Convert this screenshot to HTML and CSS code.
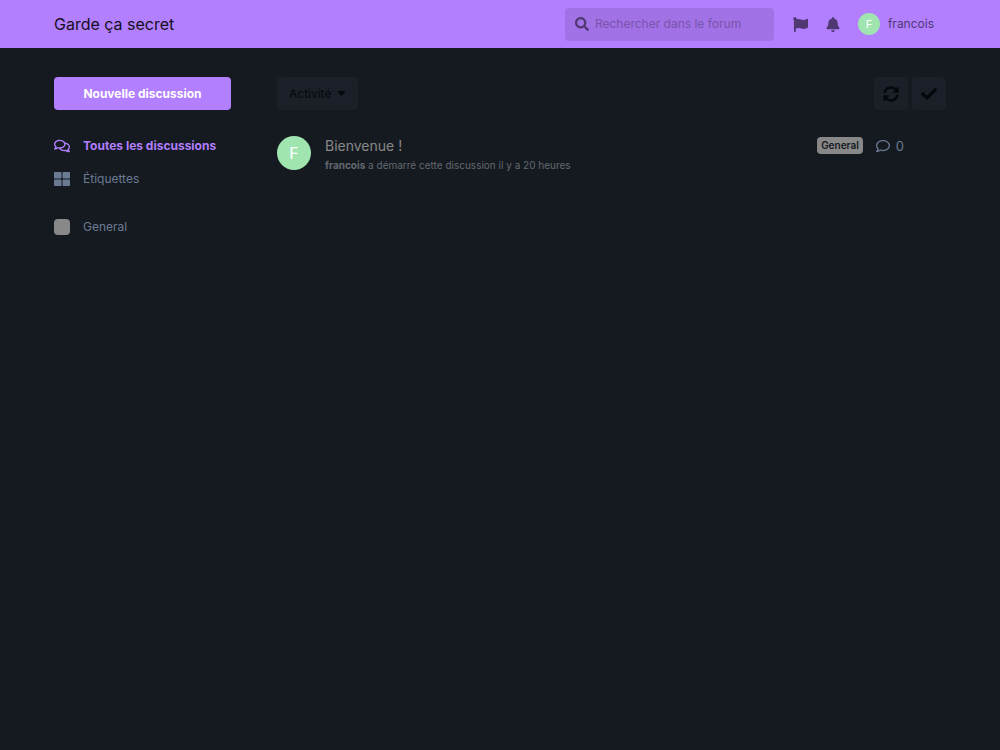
FILE: index.html
```
<!DOCTYPE html>
<html lang="fr">
<head>
    <meta charset="utf-8">
    <meta name="viewport" content="width=device-width, initial-scale=1">
    <title>Garde ça secret</title>
    <link rel="stylesheet" href="styles.css">
</head>
<body>
    <header class="header">
        <div class="container header-inner">
            <h1 class="header-title"><a href="#">Garde ça secret</a></h1>
            <form class="search">
                <svg class="icon" viewBox="0 0 512 512" aria-hidden="true"><path d="M505 442.700L405.300 343c-4.500-4.500-10.600-7-17-7H372c27.600-35.300 44-79.700 44-128C416 93.100 322.900 0 208 0S0 93.100 0 208s93.100 208 208 208c48.300 0 92.700-16.400 128-44v16.300c0 6.400 2.500 12.500 7 17l99.700 99.700c9.400 9.400 24.600 9.400 33.900 0l28.300-28.300c9.400-9.400 9.400-24.600.1-34zM208 336c-70.700 0-128-57.200-128-128 0-70.700 57.200-128 128-128 70.700 0 128 57.200 128 128 0 70.700-57.200 128-128 128z"/></svg>
                <input type="search" placeholder="Rechercher dans le forum" aria-label="Rechercher dans le forum">
            </form>
            <button class="header-button" type="button" aria-label="Signalements">
                <svg class="icon flag" viewBox="0 0 512 512"><path d="M349.565 98.783C295.978 98.783 251.721 64 184.348 64c-24.955 0-47.309 4.384-68.045 12.013a55.947 55.947 0 0 0 3.586-23.562C118.117 24.015 94.806 1.206 66.338.048 34.345-1.254 8 24.296 8 56c0 19.026 9.497 35.825 24 45.945V488c0 13.255 10.745 24 24 24h16c13.255 0 24-10.745 24-24v-94.400c28.311-12.064 63.582-22.122 114.435-22.122 53.588 0 97.844 34.783 165.217 34.783 48.169 0 86.667-16.294 122.505-40.858C506.840 359.452 512 349.571 512 339.045v-243.100c0-23.393-24.269-38.870-45.485-29.016-34.338 15.948-76.454 31.854-116.950 31.854z"/></svg>
            </button>
            <button class="header-button" type="button" aria-label="Notifications">
                <svg class="icon bell" viewBox="0 0 448 512"><path d="M224 512c35.320 0 63.970-28.650 63.970-64H160.030c0 35.350 28.650 64 63.970 64zm215.390-149.710c-19.320-20.760-55.470-51.990-55.470-154.290 0-77.700-54.480-139.900-127.940-155.160V32c0-17.670-14.320-32-31.980-32s-31.980 14.330-31.980 32v20.840C118.560 68.100 64.080 130.300 64.080 208c0 102.300-36.150 133.530-55.470 154.290-6 6.450-8.660 14.160-8.610 21.710.11 16.400 12.980 32 32.100 32h383.800c19.120 0 32-15.600 32.100-32 .05-7.550-2.610-15.270-8.610-21.710z"/></svg>
            </button>
            <button class="user-button" type="button">
                <span class="avatar avatar-small">F</span>
                francois
            </button>
        </div>
    </header>

    <div class="container page">
        <nav class="sidebar">
            <button class="new-discussion" type="button">Nouvelle discussion</button>
            <ul class="nav-list">
                <li>
                    <a class="nav-link active" href="#">
                        <svg class="icon comments" viewBox="0 0 576 512" aria-hidden="true"><path d="M532 386.200c27.500-27.100 44-61.100 44-98.200 0-80-76.500-146.100-176.200-157.900C368.300 72.500 294.300 32 208 32 93.100 32 0 103.600 0 192c0 37 16.500 71 44 98.200-15.300 30.700-37.300 54.500-37.700 54.900-6.300 6.700-8.100 16.500-4.400 25 3.600 8.500 12 14 21.200 14 53.500 0 96.700-20.200 125.200-38.800 9.200 2.100 18.700 3.700 28.400 4.900C208.100 407.600 281.800 448 368 448c20.800 0 40.800-2.400 59.800-6.800C456.300 459.700 499.400 480 553 480c9.200 0 17.500-5.500 21.200-14 3.600-8.500 1.900-18.300-4.400-25-.4-.3-22.500-24.100-37.800-54.800zm-392.800-92.300L122.100 305c-14.100 9.100-28.500 16.300-43.100 21.400 2.700-4.700 5.400-9.700 8-14.800l15.500-31.100L77.700 256C64.200 242.600 48 220.700 48 192c0-60.700 73.300-112 160-112s160 51.300 160 112-73.300 112-160 112c-16.500 0-33-1.900-49-5.600l-19.800-4.500zM498.300 352l-24.700 24.400 15.500 31.100c2.600 5.100 5.300 10.100 8 14.800-14.600-5.100-29-12.300-43.100-21.400l-17.100-11.100-19.900 4.600c-16 3.700-32.500 5.600-49 5.600-54 0-102.200-20.100-131.300-49.700C338 339.500 416 272.900 416 192c0-3.400-.4-6.700-.7-10C479.700 196.500 528 238.800 528 288c0 28.700-16.200 50.600-29.700 64z"/></svg>
                        Toutes les discussions
                    </a>
                </li>
                <li>
                    <a class="nav-link" href="#">
                        <svg class="icon" viewBox="0 0 512 512" aria-hidden="true"><path d="M296 32h192c13.255 0 24 10.745 24 24v160c0 13.255-10.745 24-24 24H296c-13.255 0-24-10.745-24-24V56c0-13.255 10.745-24 24-24zm-80 0H24C10.745 32 0 42.745 0 56v160c0 13.255 10.745 24 24 24h192c13.255 0 24-10.745 24-24V56c0-13.255-10.745-24-24-24zM0 296v160c0 13.255 10.745 24 24 24h192c13.255 0 24-10.745 24-24V296c0-13.255-10.745-24-24-24H24c-13.255 0-24 10.745-24 24zm296 184h192c13.255 0 24-10.745 24-24V296c0-13.255-10.745-24-24-24H296c-13.255 0-24 10.745-24 24v160c0 13.255 10.745 24 24 24z"/></svg>
                        Étiquettes
                    </a>
                </li>
                <li class="separated">
                    <a class="nav-link" href="#"><span class="tag-icon"></span>General</a>
                </li>
            </ul>
        </nav>

        <main class="content">
            <div class="toolbar">
                <button class="tool sort" type="button">
                    Activité
                    <svg class="caret" viewBox="0 0 10 6" aria-hidden="true"><path d="M1 0h8q1 0 .5 1L5.700 5.500q-.7.700-1.400 0L.5 1Q0 0 1 0z"/></svg>
                </button>
                <div class="toolbar-actions">
                    <button class="tool square" type="button" aria-label="Rafraîchir">
                        <svg class="icon" viewBox="0 0 512 512"><path d="M370.720 133.280C339.458 104.008 298.888 87.962 255.848 88c-77.458.068-144.328 53.178-162.791 126.850-1.344 5.363-6.122 9.150-11.651 9.150H24.103c-7.498 0-13.194-6.807-11.807-14.176C33.933 94.924 134.813 8 256 8c66.448 0 126.791 26.136 171.315 68.685L463.030 40.970C478.149 25.851 504 36.559 504 57.941V192c0 13.255-10.745 24-24 24H345.941c-21.382 0-32.090-25.851-16.971-40.971l41.750-41.749zM32 296h134.059c21.382 0 32.090 25.851 16.971 40.971l-41.750 41.750c31.262 29.273 71.835 45.319 114.876 45.280 77.418-.070 144.315-53.144 162.787-126.849 1.344-5.363 6.122-9.150 11.651-9.150h57.304c7.498 0 13.194 6.807 11.807 14.176C478.067 417.076 377.187 504 256 504c-66.448 0-126.791-26.136-171.315-68.685L48.970 471.030C33.851 486.149 8 475.441 8 454.059V320c0-13.255 10.745-24 24-24z"/></svg>
                    </button>
                    <button class="tool square" type="button" aria-label="Tout marquer comme lu">
                        <svg class="icon" viewBox="0 0 512 512"><path d="M173.898 439.404l-166.400-166.400c-9.997-9.997-9.997-26.206 0-36.204l36.203-36.204c9.997-9.998 26.207-9.998 36.204 0L192 312.690 432.095 72.596c9.997-9.997 26.207-9.997 36.204 0l36.203 36.204c9.997 9.997 9.997 26.206 0 36.204l-294.400 294.401c-9.998 9.997-26.207 9.997-36.204-.001z"/></svg>
                    </button>
                </div>
            </div>

            <ul class="discussions">
                <li class="discussion">
                    <span class="avatar">F</span>
                    <a class="discussion-main" href="#">
                        <h2>Bienvenue !</h2>
                        <p><strong>francois</strong> a démarré cette discussion il y a 20 heures</p>
                    </a>
                    <span class="tag-label">General</span>
                    <span class="replies">
                        <svg class="icon" viewBox="0 0 512 512" aria-hidden="true"><path d="M256 32C114.600 32 0 125.100 0 240c0 47.600 19.900 91.200 52.900 126.300C38 405.700 7 439.100 6.500 439.500c-6.600 7-8.400 17.200-4.600 26S14.400 480 24 480c61.500 0 110-25.700 139.100-46.300C192 442.800 223.200 448 256 448c141.400 0 256-93.100 256-208S397.400 32 256 32zm0 368c-26.700 0-53.100-4.100-78.400-12.100l-22.700-7.200-19.500 13.800c-14.300 10.100-33.900 21.400-57.500 29 7.300-12.100 14.400-25.700 19.900-40.200l10.600-28.100-20.600-21.800C69.700 314.100 48 282.200 48 240c0-88.200 93.300-160 208-160s208 71.800 208 160-93.300 160-208 160z"/></svg>
                        0
                    </span>
                </li>
            </ul>
        </main>
    </div>
</body>
</html>
```
FILE: styles.css
```
* { box-sizing: border-box; }
body {
    margin: 0;
    background: #151a20;
    color: #68727f;
    font: 12px/20px Inter, "Liberation Sans", sans-serif;
}
a { color: inherit; text-decoration: none; }
button, input { font: inherit; color: inherit; }
button { border: 0; padding: 0; background: none; cursor: pointer; }
h1, h2, p, ul { margin: 0; padding: 0; font-weight: normal; }
ul { list-style: none; }
.container { padding: 0 54px; }
.icon { display: block; width: 14px; height: 14px; fill: currentColor; flex: none; }

/* header */
.header { background: #b27fff; color: #503973; }
.header-inner { display: flex; align-items: center; height: 48px; }
.header-title { margin-right: auto; font-size: 16px; color: #15101e; }
.search {
    display: flex;
    align-items: center;
    gap: 6px;
    width: 209px;
    height: 33px;
    margin-right: 18px;
    padding: 0 10px;
    border-radius: 4px;
    background: #a072e5;
}
.search input { flex: 1; min-width: 0; padding: 0; border: 0; outline: 0; background: none; }
.search input::placeholder { color: #7854ac; opacity: 1; }
.header-button { display: flex; justify-content: center; width: 17px; margin-right: 16px; }
.flag { width: 15px; height: 15px; }
.bell { height: 15px; }
.user-button { display: flex; align-items: center; gap: 8px; margin-right: 12px; }

.avatar {
    flex: none;
    width: 34px;
    height: 34px;
    border-radius: 50%;
    background: #a0e5b0;
    color: #fff;
    font-size: 16px;
    line-height: 34px;
    text-align: center;
}
.avatar-small { width: 22px; height: 22px; font-size: 11px; line-height: 22px; }

/* page */
.page { display: flex; gap: 46px; padding-top: 29px; }
.sidebar { flex: none; width: 177px; color: #6b7a93; }
.new-discussion {
    width: 100%;
    height: 33px;
    border-radius: 4px;
    background: #b27fff;
    color: #fff;
    font-weight: bold;
}
.nav-list { margin-top: 19px; }
.nav-link { display: flex; align-items: center; gap: 13px; height: 33px; }
.nav-link .icon { width: 16px; height: 16px; }
.active { color: #b27fff; font-weight: bold; }
.separated { margin-top: 15px; }
.tag-icon { width: 16px; height: 16px; border-radius: 4px; background: #888; }

.content { flex: 1; min-width: 0; }
.toolbar { display: flex; justify-content: space-between; }
.toolbar-actions { display: flex; gap: 4px; }
.tool {
    display: flex;
    align-items: center;
    justify-content: center;
    height: 33px;
    border-radius: 4px;
    background: #1b2028;
    color: #05070a;
}
.sort { gap: 6px; padding: 0 12px; }
.caret { width: 9px; height: 5px; fill: currentColor; }
.square { width: 34px; }
.square .icon { width: 16px; height: 16px; }

.discussions { margin-top: 26px; }
.discussion { display: flex; align-items: flex-start; padding-right: 42px; }
.discussion-main { flex: 1; min-width: 0; margin-left: 14px; }
.discussion h2 { font-size: 14px; color: #888; }
.discussion p { font-size: 10px; line-height: 18px; color: #636870; }
.tag-label {
    margin: 1px 13px 0 0;
    padding: 0 4px;
    border-radius: 4px;
    background: #888;
    color: #15191f;
    font-size: 10px;
    font-weight: 600;
    line-height: 17px;
}
.replies { display: flex; align-items: center; gap: 6px; color: #6b7a93; font-size: 13px; }
```
